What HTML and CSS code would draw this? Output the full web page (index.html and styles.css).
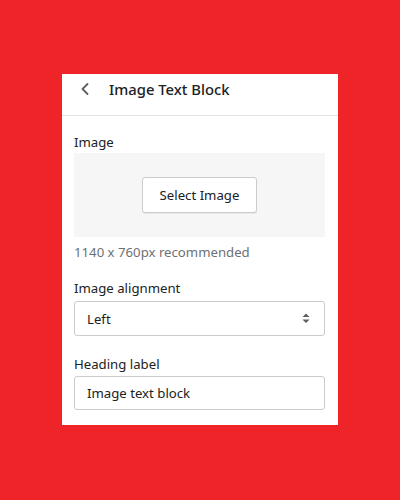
FILE: index.html
```html
<!DOCTYPE html>
<html>
<head>
<meta charset="utf-8">
<link rel="stylesheet" href="styles.css">
</head>
<body>
<div class="panel">
  <div class="header">
    <svg class="back" width="8" height="12" viewBox="0 0 8 12"><path d="M6.5 1 L1.5 6 L6.5 11" fill="none" stroke="#5c5f62" stroke-width="1.8" stroke-linecap="round" stroke-linejoin="round"/></svg>
    <span class="title">Image Text Block</span>
  </div>
  <div class="content">
    <div class="label">Image</div>
    <div class="dropzone"><button class="btn">Select Image</button></div>
    <div class="help">1140 x 760px recommended</div>
    <div class="label gap">Image alignment</div>
    <div class="field select">
      <span>Left</span>
      <svg class="arrows" width="8" height="11" viewBox="0 0 8 11"><path d="M4 0.5 L7.5 4 L0.5 4 Z M0.5 6.5 L7.5 6.5 L4 10 Z" fill="#5c5f62"/></svg>
    </div>
    <div class="label gap2">Heading label</div>
    <div class="field input">Image text block</div>
  </div>
</div>
</body>
</html>
```
FILE: styles.css
```css
* { box-sizing: border-box; }
body {
  margin: 0;
  background: #ef2428;
  font-family: "Noto Sans", "Open Sans", sans-serif;
  font-size: 13.2px;
  color: #202223;
  width: 400px;
  height: 500px;
  overflow: hidden;
}
.panel {
  margin: 74px 0 0 62px;
  width: 276px;
  height: 351px;
  background: #fff;
}
.header {
  height: 42px;
  border-bottom: 1px solid #e1e3e5;
  display: flex;
  align-items: center;
  padding: 0 0 12px 19px;
}
.back { margin-right: 20px; margin-top: 1px; }
.title {
  font-family: "Noto Sans", "Open Sans", sans-serif;
  font-size: 14.8px;
  font-weight: 500;
  color: #202223;
}
.content {
  padding: 16px 13px 0 12px;
}
.label {
  line-height: 20px;
  margin-bottom: 1px;
}
.label.gap { margin-top: 16px; margin-bottom: 3px; }
.label.gap2 { margin-top: 18px; margin-bottom: 2px; }
.dropzone {
  height: 84px;
  background: #f6f6f7;
  display: flex;
  align-items: center;
  justify-content: center;
}
.btn {
  width: 115px;
  height: 36px;
  background: #fff;
  border: 1px solid #c9cccf;
  border-radius: 3px;
  box-shadow: 0 1px 0 rgba(0,0,0,0.05);
  font-family: inherit;
  font-size: 13.2px;
  color: #202223;
  padding: 0;
}
.help {
  color: #6d7175;
  line-height: 20px;
  margin-top: 5px;
}
.field {
  height: 35px;
  border: 1px solid #c9cccf;
  border-radius: 3px;
  display: flex;
  align-items: center;
  padding: 0 12px;
  color: #202223;
}
.select { justify-content: space-between; padding-right: 14px; }
.input { height: 34px; }
```
